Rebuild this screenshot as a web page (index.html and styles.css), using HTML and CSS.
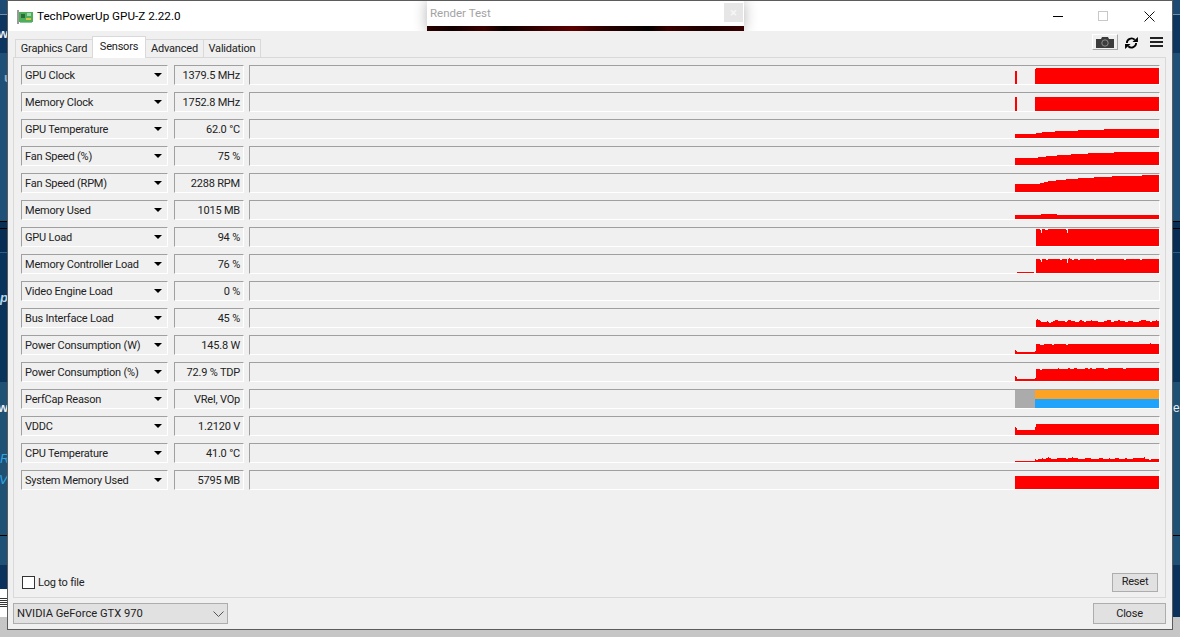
FILE: index.html
```html
<!DOCTYPE html>
<html lang="en">
<head>
  <meta charset="UTF-8">
  <title>TechPowerUp GPU-Z 2.22.0</title>
  <link rel="stylesheet" href="styles.css">
</head>
<body>
  <!-- desktop behind the window -->
  <div class="desktop">
    <div class="band b1"></div>
    <div class="band b2"></div>
    <div class="band b3"></div>
    <div class="band b4"></div>
    <div class="band b5"></div>
    <div class="band b6"></div>
    <div class="band b7"></div>
    <div class="band b8"></div>
    <div class="band b9"></div>
    <div class="band b10"></div>
    <div class="band b11"></div>
    <span class="frag f-w1">w</span>
    <span class="frag f-u">u</span>
    <span class="frag f-p">p</span>
    <span class="frag f-w2">w</span>
    <span class="frag f-r">R</span>
    <span class="frag f-v">V,</span>
    <span class="frag f-se">e</span>
    <div class="doc-icon"><i></i><i></i><i></i><i></i><i></i></div>
  </div>

  <div class="window">
    <div class="titlebar">
      <svg class="app-icon" width="16" height="14" viewBox="0 0 16 14">
        <rect x="0" y="0" width="2" height="14" fill="#9a9a9a"/>
        <rect x="2" y="2" width="14" height="10" fill="#4fae5a"/>
        <rect x="4" y="4" width="4" height="4" fill="#2b6d3a"/>
        <rect x="10" y="3" width="4" height="3" fill="#9fd8a8"/>
        <rect x="9" y="8" width="5" height="2" fill="#d8c34a"/>
        <rect x="3" y="12" width="12" height="1" fill="#8cc79a"/>
      </svg>
      <span class="title">TechPowerUp GPU-Z 2.22.0</span>
      <div class="render-test">
        <div class="rt-head">
          <span>Render Test</span>
          <b>×</b>
        </div>
        <div class="rt-canvas"></div>
      </div>
      <div class="win-btns">
        <span class="win-min"></span>
        <span class="win-max"></span>
        <svg class="win-close" width="11" height="11" viewBox="0 0 11 11"><path d="M.5.5l10 10M10.500.5l-10 10" stroke="#111" fill="none"/></svg>
      </div>
    </div>

    <div class="content">
      <div class="tabbar">
        <div class="tabs">
          <span class="tab tab-gc">Graphics Card</span>
          <span class="tab tab-se active">Sensors</span>
          <span class="tab tab-ad">Advanced</span>
          <span class="tab tab-va">Validation</span>
        </div>
        <div class="tools">
          <span class="cam-btn">
            <svg width="18" height="11" viewBox="0 0 18 11">
              <path d="M0 2h5l1-2h6l1 2h5v9H0z" fill="#3c3c3c"/>
              <circle cx="9" cy="6" r="3.200" fill="#3c3c3c" stroke="#8d8d8d"/>
            </svg>
          </span>
          <svg class="refresh" width="13" height="12" viewBox="0 0 14 13">
            <path d="M2 6.500A5 4.800 0 0 1 10.500 3" fill="none" stroke="#000" stroke-width="2"/>
            <path d="M12 6.500A5 4.800 0 0 1 3.500 10" fill="none" stroke="#000" stroke-width="2"/>
            <path d="M8 5.500h6V0z" fill="#000"/>
            <path d="M6 7.500H0V13z" fill="#000"/>
          </svg>
          <span class="menu"><i></i><i></i><i></i></span>
        </div>
      </div>

      <div class="panel">
        <div class="row">
          <div class="sel">GPU Clock</div><div class="val">1379.5 MHz</div>
          <div class="graph"><svg viewBox="0 0 144 18"><path d="M0 5H2V18H0Z M20 3H21V2H144V18H20Z"/></svg></div>
        </div>
        <div class="row">
          <div class="sel">Memory Clock</div><div class="val">1752.8 MHz</div>
          <div class="graph"><svg viewBox="0 0 144 18"><path d="M0 4H2V18H0Z M20 4H144V18H20Z"/></svg></div>
        </div>
        <div class="row">
          <div class="sel">GPU Temperature</div><div class="val">62.0 °C</div>
          <div class="graph"><svg viewBox="0 0 144 18"><path d="M0 18V14H21V13H27V12H40V11H63V10H89V9H144V18Z"/></svg></div>
        </div>
        <div class="row">
          <div class="sel">Fan Speed (%)</div><div class="val">75 %</div>
          <div class="graph"><svg viewBox="0 0 144 18"><path d="M0 18V11H23V10H31V9H42V8H56V7H73V6H99V5H144V18Z"/></svg></div>
        </div>
        <div class="row">
          <div class="sel">Fan Speed (RPM)</div><div class="val">2288 RPM</div>
          <div class="graph"><svg viewBox="0 0 144 18"><path d="M0 18V10H25V9H29V8H33V7H41V6H51V5H63V4H79V3H97V2H127V1H144V18Z"/></svg></div>
        </div>
        <div class="row">
          <div class="sel">Memory Used</div><div class="val">1015 MB</div>
          <div class="graph"><svg viewBox="0 0 144 18"><path d="M0 18V14H26V13H42V14H144V18Z"/></svg></div>
        </div>
        <div class="row">
          <div class="sel">GPU Load</div><div class="val">94 %</div>
          <div class="graph"><svg viewBox="0 0 144 18"><path d="M21 1H25V2H26V5H27V1H30V2H33V1H51V2H52V5H53V1H144V18H21Z"/></svg></div>
        </div>
        <div class="row">
          <div class="sel">Memory Controller Load</div><div class="val">76 %</div>
          <div class="graph"><svg viewBox="0 0 144 18"><path d="M2 17H19V18H2Z M21 4H25V5H26V7H27V4H31V5H33V4H45V5H47V4H52V8H53V4H54V3H55V4H57V5H59V4H63V5H65V4H79V5H81V4H109V5H111V4H125V5H127V4H144V18H21Z"/></svg></div>
        </div>
        <div class="row">
          <div class="sel">Video Engine Load</div><div class="val">0 %</div>
          <div class="graph"></div>
        </div>
        <div class="row">
          <div class="sel">Bus Interface Load</div><div class="val">45 %</div>
          <div class="graph"><svg viewBox="0 0 144 18"><path d="M21 18V11H22V10H23V11H25V12H26V13H32V12H33V13H34V14H36V13H38V12H40V11H43V12H50V13H52V12H53V11H56V12H60V13H64V12H65V11H67V12H69V13H71V12H76V11H77V12H83V13H89V12H92V11H96V13H99V12H103V11H105V12H110V13H113V12H118V13H124V12H126V11H131V12H135V13H137V12H141V11H142V12H144V18Z"/></svg></div>
        </div>
        <div class="row">
          <div class="sel">Power Consumption (W)</div><div class="val">145.8 W</div>
          <div class="graph"><svg viewBox="0 0 144 18"><path d="M0 18V14H1V15H2V16H20V15H21V8H25V9H29V8H37V9H39V8H51V9H53V8H135V7H136V8H144V18Z"/></svg></div>
        </div>
        <div class="row">
          <div class="sel">Power Consumption (%)</div><div class="val">72.9 % TDP</div>
          <div class="graph"><svg viewBox="0 0 144 18"><path d="M0 18V13H1V14H2V16H20V15H21V6H25V7H27V6H43V5H44V6H53V5H55V6H59V5H62V6H70V5H73V6H75V5H77V6H81V5H89V6H93V5H108V6H111V5H144V18Z"/></svg></div>
        </div>
        <div class="row">
          <div class="sel">PerfCap Reason</div><div class="val">VRel, VOp</div>
          <div class="graph">
            <svg viewBox="0 0 144 18">
              <rect class="pc-grey" x="0" y="0" width="20" height="18"/>
              <rect class="pc-orange" x="20" y="0" width="124" height="9"/>
              <rect class="pc-blue" x="20" y="9" width="124" height="9"/>
            </svg>
          </div>
        </div>
        <div class="row">
          <div class="sel">VDDC</div><div class="val">1.2120 V</div>
          <div class="graph"><svg viewBox="0 0 144 18"><path d="M0 18V10H1V11H2V13H20V10H21V7H144V18Z"/></svg></div>
        </div>
        <div class="row">
          <div class="sel">CPU Temperature</div><div class="val">41.0 °C</div>
          <div class="graph"><svg viewBox="0 0 144 18"><path d="M0 18V17H20V15H21V16H23V15H27V14H28V15H31V14H33V13H34V14H36V15H42V14H51V15H53V14H57V13H58V14H63V15H70V14H76V15H84V14H88V15H94V14H95V15H100V14H104V15H110V14H112V15H118V14H129V13H130V15H134V16H136V15H144V18Z"/></svg></div>
        </div>
        <div class="row">
          <div class="sel">System Memory Used</div><div class="val">5795 MB</div>
          <div class="graph"><svg viewBox="0 0 144 18"><path d="M0 5H144V18H0Z"/></svg></div>
        </div>

        <div class="panel-foot">
          <label class="log"><span class="check"></span>Log to file</label>
          <span class="btn btn-reset">Reset</span>
        </div>
      </div>

      <div class="foot">
        <div class="gpu-select">
          <span>NVIDIA GeForce GTX 970</span>
          <svg width="11" height="6" viewBox="0 0 11 6"><path d="M.5.500l5 5 5-5" fill="none" stroke="#555"/></svg>
        </div>
        <span class="btn btn-close">Close</span>
      </div>
    </div>
  </div>
</body>
</html>
```

FILE: styles.css
```css
* { box-sizing: border-box; margin: 0; padding: 0; }
html, body { width: 1180px; height: 637px; overflow: hidden; }
body {
  position: relative;
  font-family: Roboto, "Liberation Sans", sans-serif;
  font-size: 11px;
  letter-spacing: -.2px;
  color: #222;
  background: #d2d2d2;
}

/* desktop */
.desktop {
  position: absolute;
  inset: 0;
  display: flex;
  flex-direction: column;
}
.band { flex: none; }
.b1 { height: 15px; background: #1c4a73; border-bottom: 1px solid #6f8fa8; }
.b2 { height: 38px; background: #0c3560; }
.b3 { height: 168px; background: #1f5077; }
.b4 { height: 7px; background: #0a2f52; border-top: 1px solid #000; }
.b5 { height: 24px; background: #072d54; border-top: 1px solid #000; }
.b6 { height: 130px; background: #0a335c; border-top: 1px solid #2a5f88; }
.b7 { height: 154px; background: #1f5175; border-bottom: 1px solid #000; }
.b8 { height: 29px; background: #1f5176; }
.b9 { height: 24px; background: #0a325c; }
.b10 { height: 28px; background: #0a325c; }
.b11 { height: 20px; background: #c6c6c6; }

.frag {
  position: absolute;
  color: #e8eef3;
  font: bold 13px "Liberation Sans", sans-serif;
  letter-spacing: 0;
}
.f-w1 { left: -2px; top: 26px; }
.f-u { left: 4px; top: 70px; color: #8fb2cc; }
.f-p { left: 0; top: 290px; font-style: italic; color: #b7d3e6; }
.f-w2 { left: -2px; top: 400px; }
.f-r { left: 0; top: 451px; font-style: italic; font-weight: normal; color: #2ea7e0; }
.f-v { left: -1px; top: 472px; font-style: italic; font-weight: normal; color: #2ea7e0; }
.f-se { left: 1173px; top: 401px; font-size: 12px; font-weight: normal; }

.doc-icon {
  position: absolute;
  left: 0;
  top: 589px;
  width: 7px;
  height: 28px;
  background: #fff;
  padding-top: 9px;
}
.doc-icon i { display: block; height: 1px; margin-bottom: 1px; background: #333; }

/* main window */
.window {
  position: absolute;
  left: 7px;
  top: 0;
  width: 1166px;
  height: 630px;
  border: 1px solid #5c5c5c;
  display: flex;
  flex-direction: column;
  background: #f0f0f0;
}
.titlebar {
  position: relative;
  flex: none;
  height: 30px;
  background: #fff;
  display: flex;
  align-items: center;
  padding-left: 9px;
  overflow: hidden;
}
.app-icon { margin-right: 4px; margin-top: 1px; }
.title { font-size: 11.700px; letter-spacing: 0; color: #000; }

.render-test {
  position: absolute;
  left: 419px;
  top: 0;
  width: 317px;
  height: 30px;
  background: #fff;
  box-shadow: 0 0 14px rgba(0, 0, 0, .3);
  display: flex;
  flex-direction: column;
}
.rt-head {
  flex: 1;
  display: flex;
  justify-content: space-between;
  padding: 2px 1px 0 3px;
  color: #a3a3a3;
  font-size: 11.500px;
  letter-spacing: 0;
}
.rt-head span { margin-top: 3px; }
.rt-head b {
  width: 19px;
  height: 19px;
  background: #e6e6e6;
  color: #f6f6f6;
  font-size: 13px;
  line-height: 19px;
  text-align: center;
}
.rt-canvas {
  flex: none;
  height: 5px;
  background: linear-gradient(90deg, #2a0000 0%, #120000 8%, #3c0000 18%, #0c0000 24%, #3a0000 36%, #5c0000 46%, #2c0000 56%, #050000 70%, #3a0000 76%, #1c0000 88%, #380000 100%);
}

.win-btns {
  margin-left: auto;
  display: flex;
  align-items: center;
  padding-right: 17px;
}
.win-min { width: 10px; height: 1px; background: #000; margin-right: 35px; }
.win-max { width: 10px; height: 10px; border: 1px solid #c8c8c8; margin-right: 36px; }
.win-close { display: block; }

/* tabs row */
.content {
  flex: 1;
  display: flex;
  flex-direction: column;
  min-height: 0;
}
.tabbar {
  flex: none;
  height: 26px;
  display: flex;
  justify-content: space-between;
  padding: 0 9px 0 7px;
}
.tabs { display: flex; align-items: flex-end; }
.tab {
  height: 18px;
  border: 1px solid #d9d9d9;
  border-bottom: none;
  text-align: center;
  line-height: 17px;
  background: #f0f0f0;
  margin-left: -1px;
}
.tab-gc { width: 78px; margin-left: 0; }
.tab-se { width: 54px; }
.tab-ad { width: 59px; }
.tab-va { width: 58px; }
.tab.active {
  height: 22px;
  background: #fff;
  position: relative;
  margin-bottom: -1px;
  line-height: 19px;
  z-index: 1;
}
.tools { display: flex; align-items: flex-start; padding-top: 3px; }
.cam-btn {
  width: 26px;
  height: 16px;
  border: 1px solid;
  border-color: #fff #a8a8a8 #a8a8a8 #fff;
  display: flex;
  align-items: center;
  justify-content: center;
  margin-right: 7px;
}
.refresh { margin-top: 3px; margin-right: 12px; }
.menu { width: 13px; margin-top: 3px; display: flex; flex-direction: column; gap: 2px; }
.menu i { display: block; height: 2px; background: #222; }

/* sensors panel */
.panel {
  flex: none;
  height: 541px;
  margin: 0 6px 0 5px;
  border: 1px solid #d9d9d9;
  padding: 7px 5px 5px 7px;
  display: flex;
  flex-direction: column;
}
.row {
  flex: none;
  display: flex;
  height: 20px;
  margin-bottom: 7px;
}
.sel, .val, .graph {
  height: 20px;
  border: 1px solid;
  border-color: #a0a0a0 #fff #fff #a0a0a0;
  line-height: 20px;
}
.sel {
  position: relative;
  width: 147px;
  margin-right: 6px;
  padding-left: 3px;
  white-space: nowrap;
}
.sel::after {
  content: "";
  position: absolute;
  right: 5px;
  top: 7px;
  border-style: solid;
  border-width: 4px 4px 0;
  border-color: #000 transparent transparent;
}
.val {
  width: 70px;
  margin-right: 5px;
  padding-right: 3px;
  text-align: right;
  white-space: nowrap;
}
.graph {
  flex: 1;
  display: flex;
  justify-content: flex-end;
}
.graph svg { display: block; width: 144px; height: 18px; fill: #f00; }
.pc-grey { fill: #ababab; }
.pc-orange { fill: #fca326; }
.pc-blue { fill: #20a4fb; }

.panel-foot {
  margin-top: auto;
  display: flex;
  justify-content: space-between;
  align-items: center;
  padding: 0 2px 0 1px;
}
.log { display: flex; align-items: center; }
.check {
  width: 13px;
  height: 13px;
  background: #fff;
  border: 1px solid #333;
  margin-right: 3px;
}
.btn {
  display: block;
  background: #e1e1e1;
  border: 1px solid #adadad;
  text-align: center;
}
.btn-reset { width: 46px; height: 19px; line-height: 16px; }

/* footer */
.foot {
  flex: 1;
  display: flex;
  justify-content: space-between;
  align-items: flex-start;
  padding: 5px 6px 0 5px;
}
.gpu-select {
  width: 215px;
  height: 21px;
  background: #e1e1e1;
  border: 1px solid #adadad;
  display: flex;
  align-items: center;
  justify-content: space-between;
  padding: 0 3px 0 3px;
  font-size: 11.200px;
  letter-spacing: 0;
}
.btn-close { width: 73px; height: 21px; line-height: 19px; }
```
